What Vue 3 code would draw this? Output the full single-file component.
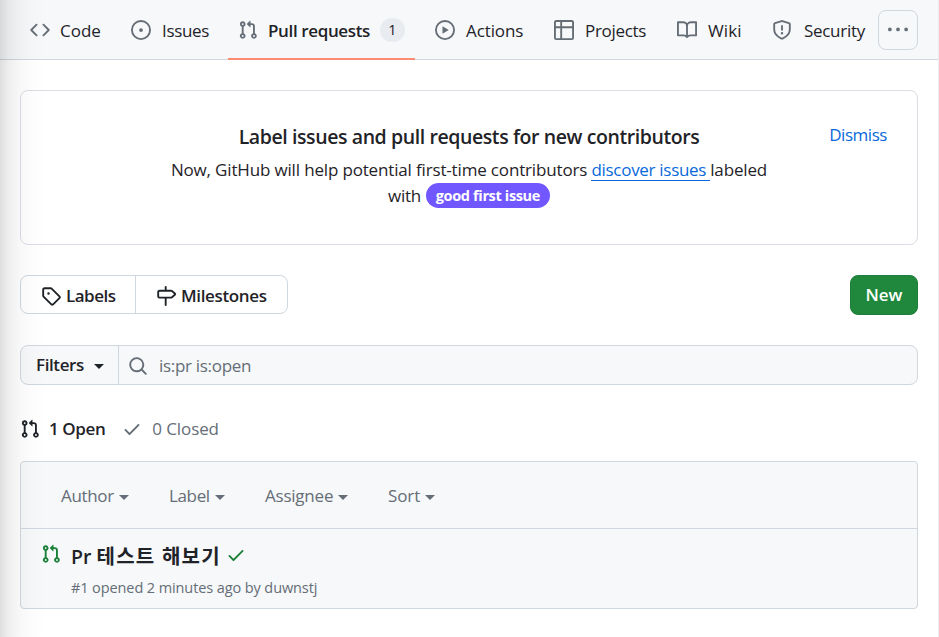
<script setup>
const icons = {
  code: 'm11.28 3.22 4.25 4.25a.75.75 0 0 1 0 1.06l-4.25 4.25a.749.749 0 0 1-1.275-.326.749.749 0 0 1 .215-.734L13.94 8l-3.72-3.72a.749.749 0 0 1 .326-1.275.749.749 0 0 1 .734.215Zm-6.56 0a.751.751 0 0 1 1.042.018.751.751 0 0 1 .018 1.042L2.06 8l3.72 3.72a.749.749 0 0 1-.326 1.275.749.749 0 0 1-.734-.215L.47 8.53a.75.75 0 0 1 0-1.06Z',
  issue: 'M8 9.5a1.5 1.5 0 1 0 0-3 1.5 1.5 0 0 0 0 3ZM8 0a8 8 0 1 1 0 16A8 8 0 0 1 8 0ZM1.5 8a6.5 6.5 0 1 0 13 0 6.5 6.5 0 0 0-13 0Z',
  pull: 'M1.5 3.25a2.25 2.25 0 1 1 3 2.122v5.256a2.251 2.251 0 1 1-1.5 0V5.372A2.25 2.25 0 0 1 1.5 3.25Zm5.677-.177L9.573.677A.25.25 0 0 1 10 .854V2.5h1A2.5 2.5 0 0 1 13.5 5v5.628a2.251 2.251 0 1 1-1.5 0V5a1 1 0 0 0-1-1h-1v1.646a.25.25 0 0 1-.427.177L7.177 3.427a.25.25 0 0 1 0-.354ZM3.75 2.5a.75.75 0 1 0 0 1.5.75.75 0 0 0 0-1.5Zm0 9.5a.75.75 0 1 0 0 1.5.75.75 0 0 0 0-1.5Zm8.25.75a.75.75 0 1 0 1.5 0 .75.75 0 0 0-1.5 0Z',
  play: 'M8 0a8 8 0 1 1 0 16A8 8 0 0 1 8 0ZM1.5 8a6.5 6.5 0 1 0 13 0 6.5 6.5 0 0 0-13 0Zm4.879-2.773 4.264 2.559a.25.25 0 0 1 0 .428l-4.264 2.559A.25.25 0 0 1 6 10.559V5.442a.25.25 0 0 1 .379-.215Z',
  table: 'M0 1.75C0 .784.784 0 1.75 0h12.5C15.216 0 16 .784 16 1.75v12.5A1.75 1.75 0 0 1 14.25 16H1.75A1.75 1.75 0 0 1 0 14.25ZM6.5 6.5v8h7.75a.25.25 0 0 0 .25-.25V6.5Zm8-1.5V1.75a.25.25 0 0 0-.25-.25H6.5V5Zm-13 1.5v7.75c0 .138.112.25.25.25H5v-8ZM5 5V1.5H1.75a.25.25 0 0 0-.25.25V5Z',
  book: 'M0 1.75A.75.75 0 0 1 .75 1h4.253c1.227 0 2.317.59 3 1.501A3.743 3.743 0 0 1 11.006 1h4.245a.75.75 0 0 1 .75.75v10.5a.75.75 0 0 1-.75.75h-4.507a2.25 2.25 0 0 0-1.591.659l-.622.621a.75.75 0 0 1-1.06 0l-.622-.621A2.25 2.25 0 0 0 5.258 13H.75a.75.75 0 0 1-.75-.75Zm7.251 10.324.004-5.073-.002-2.253A2.25 2.25 0 0 0 5.003 2.5H1.5v9h3.757a3.75 3.75 0 0 1 1.994.574ZM8.755 4.75l-.004 7.322a3.752 3.752 0 0 1 1.992-.572H14.5v-9h-3.495a2.25 2.25 0 0 0-2.25 2.25Z',
  shield: 'M7.467.133a1.748 1.748 0 0 1 1.066 0l5.25 1.68A1.75 1.75 0 0 1 15 3.48V7c0 1.566-.32 3.182-1.303 4.682-.983 1.498-2.585 2.813-5.032 3.855a1.697 1.697 0 0 1-1.33 0c-2.447-1.042-4.049-2.357-5.032-3.855C1.32 10.182 1 8.566 1 7V3.48a1.75 1.75 0 0 1 1.217-1.667Zm.61 1.429a.25.25 0 0 0-.153 0l-5.25 1.68a.25.25 0 0 0-.174.238V7c0 1.358.275 2.666 1.057 3.86.784 1.194 2.121 2.34 4.366 3.297a.196.196 0 0 0 .154 0c2.245-.956 3.582-2.104 4.366-3.298C13.225 9.666 13.5 8.36 13.5 7V3.48a.251.251 0 0 0-.174-.237l-5.25-1.68ZM8.75 4.75v3a.75.75 0 0 1-1.5 0v-3a.75.75 0 0 1 1.5 0ZM9 10.5a1 1 0 1 1-2 0 1 1 0 0 1 2 0Z',
  kebab: 'M8 9a1.5 1.5 0 1 0 0-3 1.5 1.5 0 0 0 0 3ZM1.5 9a1.5 1.5 0 1 0 0-3 1.5 1.5 0 0 0 0 3Zm13 0a1.5 1.5 0 1 0 0-3 1.5 1.5 0 0 0 0 3Z',
  tag: 'M1 7.775V2.75C1 1.784 1.784 1 2.75 1h5.025c.464 0 .91.184 1.238.513l6.25 6.25a1.75 1.75 0 0 1 0 2.474l-5.026 5.026a1.75 1.75 0 0 1-2.474 0l-6.25-6.25A1.752 1.752 0 0 1 1 7.775Zm1.5 0c0 .066.026.13.073.177l6.25 6.25a.25.25 0 0 0 .354 0l5.025-5.025a.25.25 0 0 0 0-.354l-6.25-6.25a.25.25 0 0 0-.177-.073H2.75a.25.25 0 0 0-.25.25ZM6 5a1 1 0 1 1 0 2 1 1 0 0 1 0-2Z',
  milestone: 'M7.75 0a.75.75 0 0 1 .75.75V3h3.634c.414 0 .814.147 1.13.414l2.07 1.75a1.75 1.75 0 0 1 0 2.672l-2.07 1.75a1.75 1.75 0 0 1-1.13.414H8.5v5.25a.75.75 0 0 1-1.5 0V10H2.75A1.75 1.75 0 0 1 1 8.25v-3.5C1 3.784 1.784 3 2.75 3H7V.75A.75.75 0 0 1 7.75 0Zm4.384 8.5a.25.25 0 0 0 .161-.06l2.07-1.75a.248.248 0 0 0 0-.38l-2.07-1.75a.25.25 0 0 0-.161-.06H2.75a.25.25 0 0 0-.25.25v3.5c0 .138.112.25.25.25h9.384Z',
  search: 'M10.68 11.74a6 6 0 0 1-7.922-8.982 6 6 0 0 1 8.982 7.922l3.04 3.04a.749.749 0 0 1-.326 1.275.749.749 0 0 1-.734-.215ZM11.5 7a4.499 4.499 0 1 0-8.997 0A4.499 4.499 0 0 0 11.5 7Z',
  check: 'M13.78 4.22a.75.75 0 0 1 0 1.06l-7.25 7.25a.75.75 0 0 1-1.06 0L2.22 9.28a.751.751 0 0 1 .018-1.042.751.751 0 0 1 1.042-.018L6 10.94l6.72-6.72a.75.75 0 0 1 1.06 0Z',
}

const tabs = [
  { key: 'code', label: 'Code', icon: icons.code },
  { key: 'issues', label: 'Issues', icon: icons.issue },
  { key: 'pulls', label: 'Pull requests', icon: icons.pull, count: 1, active: true },
  { key: 'actions', label: 'Actions', icon: icons.play },
  { key: 'projects', label: 'Projects', icon: icons.table },
  { key: 'wiki', label: 'Wiki', icon: icons.book },
  { key: 'security', label: 'Security', icon: icons.shield },
]

const menus = [
  { key: 'author', label: 'Author' },
  { key: 'label', label: 'Label' },
  { key: 'assignee', label: 'Assignee' },
  { key: 'sort', label: 'Sort' },
]
</script>

<template>
  <div class="page">
    <nav class="tabs">
      <a v-for="tab in tabs" :key="tab.key" class="tab" :class="[tab.key, { active: tab.active }]">
        <svg class="icon" viewBox="0 0 16 16"><path :d="tab.icon" /></svg>
        <span class="tab-label">{{ tab.label }}</span>
        <span v-if="tab.count" class="counter">{{ tab.count }}</span>
      </a>
      <button class="more">
        <svg class="icon" viewBox="0 0 16 16"><path :d="icons.kebab" /></svg>
      </button>
    </nav>

    <main class="content">
      <section class="banner">
        <div class="banner-text">
          <h4>Label issues and pull requests for new contributors</h4>
          <p class="line"><span class="lead">Now, GitHub will help potential first-time contributors </span><a class="link">discover issues </a><span class="labeled">labeled</span></p>
          <p class="line"><span class="with">with</span><span class="pill">good first issue</span></p>
        </div>
        <a class="dismiss">Dismiss</a>
      </section>

      <div class="toolbar">
        <div class="group">
          <a class="group-item labels"><svg class="icon" viewBox="0 0 16 16"><path :d="icons.tag" /></svg><span>Labels</span></a>
          <a class="group-item"><svg class="icon" viewBox="0 0 16 16"><path :d="icons.milestone" /></svg><span>Milestones</span></a>
        </div>
        <button class="new">New</button>
      </div>

      <div class="search">
        <div class="filters"><span>Filters</span><i class="caret"></i></div>
        <div class="query"><svg class="icon" viewBox="0 0 16 16"><path :d="icons.search" /></svg><span>is:pr is:open</span></div>
      </div>

      <div class="counts">
        <svg class="icon" viewBox="0 0 16 16"><path :d="icons.pull" /></svg><span class="open">1 Open</span>
        <svg class="icon muted" viewBox="0 0 16 16"><path :d="icons.check" /></svg><span class="closed">0 Closed</span>
      </div>

      <div class="list">
        <header class="list-head">
          <span v-for="m in menus" :key="m.key" class="menu" :class="m.key">{{ m.label }}<i class="caret"></i></span>
        </header>
        <article class="row">
          <svg class="icon green" viewBox="0 0 16 16"><path :d="icons.pull" /></svg>
          <div>
            <div class="row-title">
              <span class="row-name">Pr <span class="ko">테스트 해보기</span></span>
              <svg class="icon green" viewBox="0 0 16 16"><path :d="icons.check" /></svg>
            </div>
            <div class="meta">#1 opened 2 minutes ago by duwnstj</div>
          </div>
        </article>
      </div>
    </main>
    <div class="edge-shade"></div>
  </div>
</template>

<style>
body { margin: 0; background: #fff; }
</style>

<style scoped>
* { box-sizing: border-box; }
.page {
  position: relative;
  height: 637px;
  overflow: hidden;
  border-right: 1px solid #ebedef;
  color: #1f2328;
  font: 17px/26px "Open Sans", "Noto Sans CJK KR", sans-serif;
  white-space: nowrap;
}
.icon { width: 20px; height: 20px; flex: none; fill: currentColor; display: block; }
h4, p { margin: 0; }
button { font: inherit; padding: 0; }

.tabs {
  display: flex;
  gap: 10px;
  height: 60px;
  padding-left: 20px;
  background: #f6f8fa;
  border-bottom: 1px solid #d0d7de;
}
.tab { display: flex; align-items: center; height: 60px; padding: 0 10px; flex: none; }
.tab .icon { color: #656d76; margin-right: 10px; }
.tab-label { padding-top: 1px; }
.code { width: 91px; }
.issues { width: 97px; letter-spacing: -0.35px; }
.pulls { width: 187px; letter-spacing: -0.37px; font-weight: 600; }
.actions { width: 109px; letter-spacing: -0.1px; }
.projects { width: 113px; letter-spacing: -0.3px; }
.wiki { width: 85px; letter-spacing: 0.1px; }
.security { width: 106px; letter-spacing: -0.3px; }
.issues .icon, .actions .icon, .projects .icon, .wiki .icon { margin-right: 11px; }
.security .icon { margin-right: 12px; }
.active { border-bottom: 2px solid #fd8c73; padding-top: 2px; }
.counter {
  width: 25px;
  height: 24px;
  margin-left: auto;
  border-radius: 12px;
  background: #e8ebef;
  font-size: 14.5px;
  font-weight: 400;
  line-height: 24px;
  text-align: center;
  letter-spacing: 0;
}
.more {
  display: grid;
  place-items: center;
  width: 40px;
  height: 40px;
  margin: 10px 0 0;
  border: 1px solid #d0d7de;
  border-radius: 8px;
  background: #f6f8fa;
  color: #656d76;
}

.content { padding: 30px 20px 0; }
.banner {
  display: grid;
  grid-template-columns: 1fr;
  height: 155px;
  border: 1px solid #d8dee4;
  border-radius: 8px;
}
.banner-text, .dismiss { grid-area: 1 / 1; }
.banner-text { padding-top: 31px; }
h4 { font-size: 19.5px; line-height: 30px; font-weight: 600; letter-spacing: -0.41px; text-align: center; }
.line { display: flex; justify-content: center; height: 26px; white-space: pre; }
h4 + .line { margin-top: 5px; }
.lead { letter-spacing: -0.16px; }
.link { height: 24px; color: #0969da; letter-spacing: -0.3px; border-bottom: 1px solid #0969da; }
.labeled { letter-spacing: -0.15px; }
.with { letter-spacing: -0.3px; margin-right: 5px; }
.pill {
  width: 124px;
  height: 25px;
  border-radius: 13px;
  background: #7057ff;
  color: #fff;
  font-size: 14.5px;
  font-weight: 700;
  line-height: 26px;
  letter-spacing: -0.35px;
  text-align: center;
}
.dismiss { justify-self: end; margin: 31px 30px 0 0; color: #0969da; letter-spacing: -0.45px; }

.toolbar { display: flex; justify-content: space-between; height: 40px; margin-top: 30px; font-weight: 600; }
.group { display: flex; height: 39px; width: 268px; border: 1px solid #d0d7de; border-radius: 8px; }
.group-item { display: flex; align-items: center; gap: 5px; padding: 2px 0 0 20px; letter-spacing: -0.35px; }
.labels { width: 115px; border-right: 1px solid #d0d7de; letter-spacing: -0.5px; }
.new { width: 68px; border: 1px solid #1f7d3a; border-radius: 8px; background: #1f883d; color: #fff; }

.search {
  display: flex;
  height: 40px;
  margin-top: 30px;
  border: 1px solid #d0d7de;
  border-radius: 8px;
  background: #f6f8fa;
}
.filters { display: flex; align-items: center; gap: 10px; width: 98px; padding-left: 15px; border-right: 1px solid #d0d7de; font-weight: 600; letter-spacing: -0.4px; }
.query { display: flex; align-items: center; gap: 11px; padding: 1px 0 0 9px; color: #656d76; letter-spacing: -0.3px; }
.caret { display: inline-block; border: 5px solid transparent; border-top-color: currentColor; border-bottom-width: 0; }
.filters .caret { margin-top: 3px; }

.counts { display: flex; align-items: center; height: 26px; margin-top: 31px; }
.open { margin: 0 17px 0 9px; font-weight: 600; letter-spacing: -0.4px; }
.closed { margin-left: 10px; color: #656d76; letter-spacing: -0.1px; }
.muted { color: #656d76; }

.list { height: 148px; margin-top: 19px; border: 1px solid #d0d7de; border-radius: 4px; background: #f6f8fa; }
.list-head { display: flex; align-items: center; height: 67px; padding: 2px 0 0 40px; border-bottom: 1px solid #d0d7de; color: #656d76; }
.menu { display: flex; align-items: center; gap: 5px; }
.menu .caret { margin-top: 3px; }
.author { width: 108px; letter-spacing: -0.35px; }
.label { width: 96px; letter-spacing: -0.35px; }
.assignee { width: 123px; letter-spacing: -0.22px; }
.sort { letter-spacing: -0.1px; }
.row { display: flex; gap: 10px; padding: 11px 0 0 20px; }
.row > .icon { margin-top: 4px; }
.row-title { display: flex; align-items: center; gap: 5px; height: 30px; font-size: 19.5px; line-height: 30px; font-weight: 600; }
.row-name { padding-top: 3px; }
.ko { font-size: 20px; letter-spacing: 1.25px; }
.meta { margin-top: 6px; font-size: 14.5px; line-height: 24px; color: #656d76; letter-spacing: -0.1px; }
.green { color: #1a7f37; }

.edge-shade {
  position: absolute;
  inset: 0 auto 0 0;
  width: 44px;
  pointer-events: none;
  background: linear-gradient(to right, rgba(0, 0, 0, 0.13), rgba(0, 0, 0, 0.07) 18%, rgba(0, 0, 0, 0.03) 42%, rgba(0, 0, 0, 0.01) 70%, transparent);
}
</style>
